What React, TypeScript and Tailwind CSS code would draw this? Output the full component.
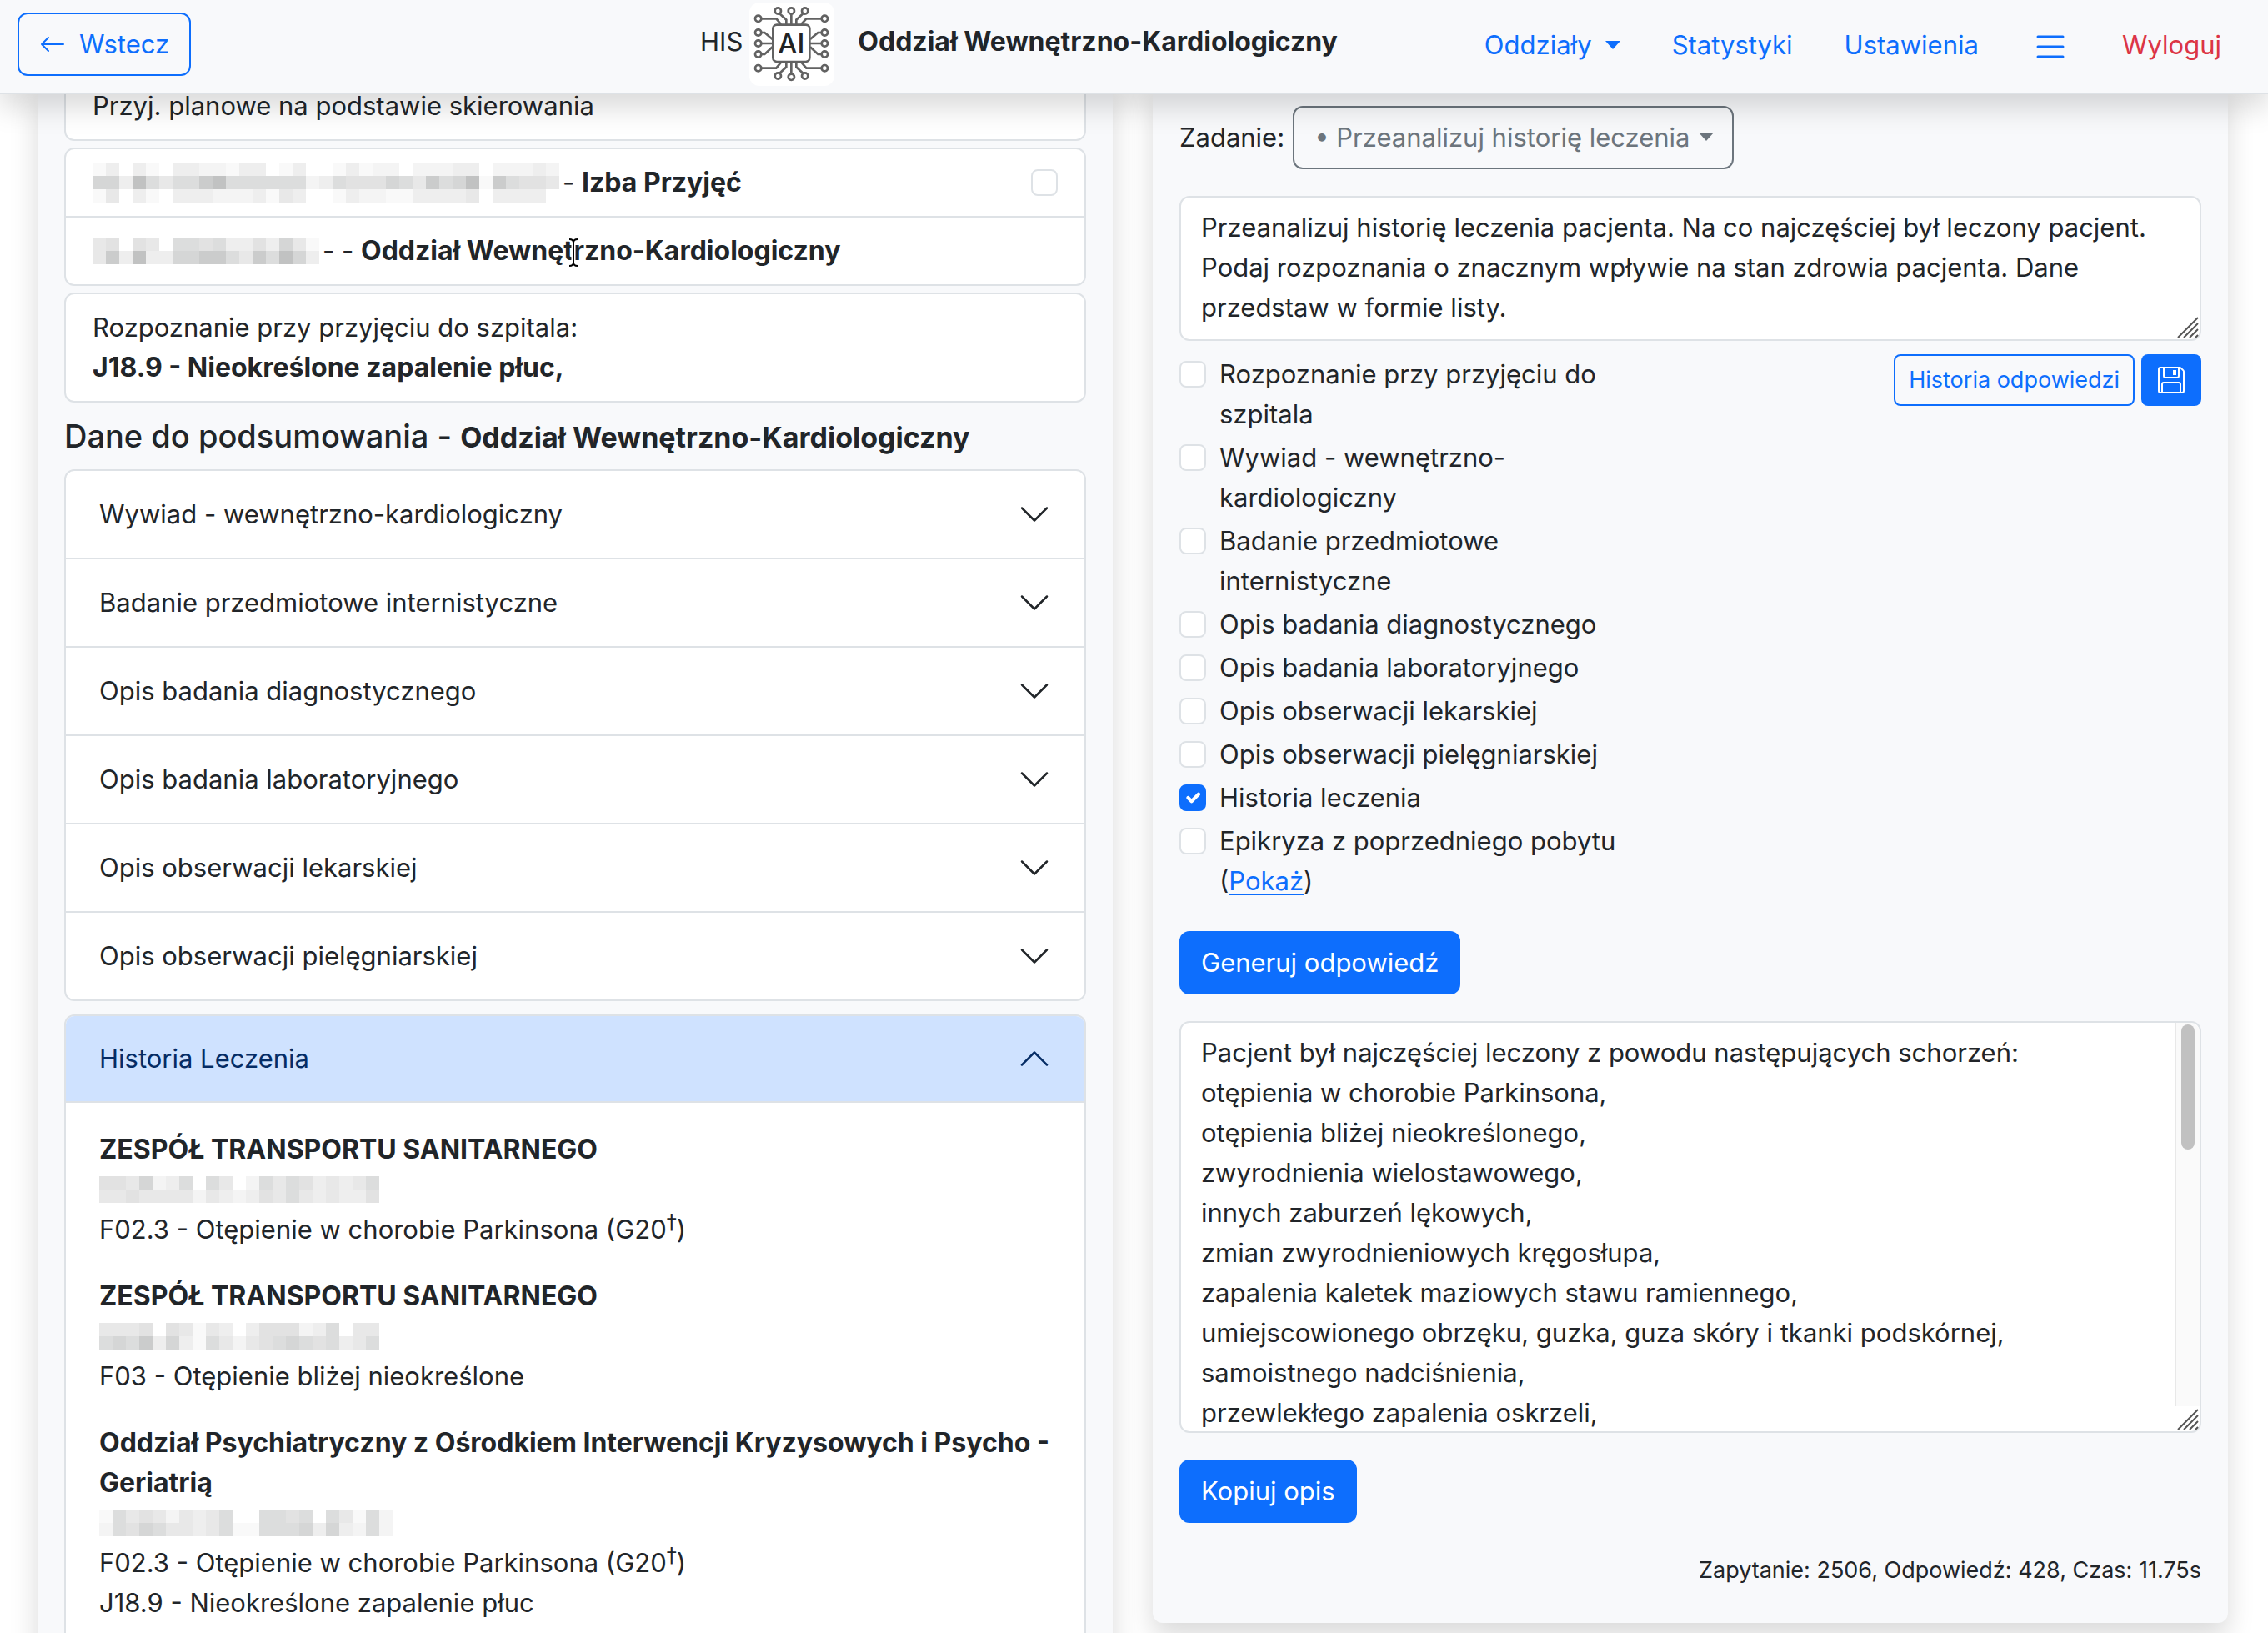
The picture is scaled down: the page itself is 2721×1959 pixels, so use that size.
import { useState } from "react";
import { BsArrowLeft, BsFloppy, BsList } from "react-icons/bs";

interface CheckOption {
  id: string;
  label: string;
  link?: string;
}

interface HistoryEntry {
  title: string;
  mask: string[];
  diagnoses: { text: string; sup?: boolean }[];
}

const sections = [
  "Wywiad - wewnętrzno-kardiologiczny",
  "Badanie przedmiotowe internistyczne",
  "Opis badania diagnostycznego",
  "Opis badania laboratoryjnego",
  "Opis obserwacji lekarskiej",
  "Opis obserwacji pielęgniarskiej",
];

const options: CheckOption[] = [
  { id: "rozpoznanie", label: "Rozpoznanie przy przyjęciu do szpitala" },
  { id: "wywiad", label: "Wywiad - wewnętrzno-kardiologiczny" },
  { id: "przedmiotowe", label: "Badanie przedmiotowe internistyczne" },
  { id: "diagnostyczne", label: "Opis badania diagnostycznego" },
  { id: "laboratoryjne", label: "Opis badania laboratoryjnego" },
  { id: "lekarskie", label: "Opis obserwacji lekarskiej" },
  { id: "pielegniarskie", label: "Opis obserwacji pielęgniarskiej" },
  { id: "historia", label: "Historia leczenia" },
  { id: "epikryza", label: "Epikryza z poprzedniego pobytu", link: "Pokaż" },
];

const history: HistoryEntry[] = [
  {
    title: "ZESPÓŁ TRANSPORTU SANITARNEGO",
    mask: ["554723606402646534346", "445444424323546434335"],
    diagnoses: [{ text: "F02.3 - Otępienie w chorobie Parkinsona", sup: true }],
  },
  {
    title: "ZESPÓŁ TRANSPORTU SANITARNEGO",
    mask: ["444505414303555236044", "676837316424567656346"],
    diagnoses: [{ text: "F03 - Otępienie bliżej nieokreślone" }],
  },
  {
    title:
      "Oddział Psychiatryczny z Ośrodkiem Interwencji Kryzysowych i Psycho - Geriatrią",
    mask: ["1645424346006656064162", "2657644346116667373262"],
    diagnoses: [
      { text: "F02.3 - Otępienie w chorobie Parkinsona", sup: true },
      { text: "J18.9 - Nieokreślone zapalenie płuc" },
    ],
  },
];

const prompt =
  "Przeanalizuj historię leczenia pacjenta. Na co najczęściej był leczony pacjent. Podaj rozpoznania o znacznym wpływie na stan zdrowia pacjenta. Dane przedstaw w formie listy.";

const answer = [
  "Pacjent był najczęściej leczony z powodu następujących schorzeń:",
  "otępienia w chorobie Parkinsona,",
  "otępienia bliżej nieokreślonego,",
  "zwyrodnienia wielostawowego,",
  "innych zaburzeń lękowych,",
  "zmian zwyrodnieniowych kręgosłupa,",
  "zapalenia kaletek maziowych stawu ramiennego,",
  "umiejscowionego obrzęku, guzka, guza skóry i tkanki podskórnej,",
  "samoistnego nadciśnienia,",
  "przewlekłego zapalenia oskrzeli,",
].join("\n");

const shades = [
  "#ffffff",
  "#f9f9f9",
  "#f4f4f4",
  "#eeeeee",
  "#e8e8e8",
  "#e2e2e2",
  "#dcdddd",
  "#d5d6d6",
  "#cbcccc",
  "#c1c2c2",
];

// Pixelated block covering personal data, one digit per 16px cell
function Mask({ rows }: { rows: string[] }) {
  return (
    <svg
      width={rows[0].length * 16}
      height={rows.length * 16}
      shapeRendering="crispEdges"
      aria-hidden="true"
    >
      {rows.map((row, y) =>
        row
          .split("")
          .map((c, x) => (
            <rect
              key={`${x}-${y}`}
              x={x * 16}
              y={y * 16}
              width="16"
              height="16"
              fill={shades[Number(c)]}
            />
          ))
      )}
    </svg>
  );
}

function Logo() {
  const nodes = [
    [59, 67], [59, 117], [59, 156], [59, 195], [59, 245],
    [298, 67], [298, 117], [298, 156], [298, 195], [298, 245],
    [130, 39], [178, 39], [227, 39],
    [130, 273], [178, 277], [227, 273],
  ];
  return (
    <svg
      viewBox="27 9 306 300"
      className="h-[100px] w-[102px] rounded-xl bg-white"
      aria-hidden="true"
    >
      <g fill="none" stroke="#626262" strokeWidth="8">
        <rect x="112" y="89" width="132" height="133" rx="14" />
        {nodes.map(([cx, cy]) => (
          <circle key={`${cx}-${cy}`} cx={cx} cy={cy} r="11" />
        ))}
        <path d="M70 67h54l17 20M70 117h12l28 24M70 156h40M70 195h12l28-26M70 245h54l17-21" />
        <path d="M287 67h-55l-18 20M287 117h-13l-28 24M287 156h-41M287 195h-13l-28-26M287 245h-55l-18-21" />
        <path d="M136 49l24 22v17M178 50v38M220 49l-24 22v17M136 263l24-22v-17M178 266v-42M220 263l-24-22v-17" />
      </g>
      <text
        x="178"
        y="192"
        textAnchor="middle"
        fill="#222"
        fontSize="98"
        fontWeight="500"
        fontFamily="Inter, sans-serif"
      >
        AI
      </text>
    </svg>
  );
}

function Caret({ className }: { className?: string }) {
  return (
    <svg
      viewBox="0 0 18 10"
      className={`h-[10px] w-[18px] ${className ?? ""}`}
      aria-hidden="true"
    >
      <path d="M0 0h18L9 10z" fill="currentColor" />
    </svg>
  );
}

function Chevron({ up }: { up?: boolean }) {
  return (
    <svg
      viewBox="0 0 16 16"
      className={up ? "size-10 shrink-0 rotate-180" : "size-10 shrink-0"}
      fill="none"
      stroke="currentColor"
      strokeLinecap="round"
      strokeLinejoin="round"
      aria-hidden="true"
    >
      <path d="m2 5 6 6 6-6" />
    </svg>
  );
}

function Grip() {
  return (
    <svg
      viewBox="0 0 26 26"
      className="absolute right-[3px] bottom-[3px] size-[26px]"
      stroke="#555"
      strokeWidth="2"
      aria-hidden="true"
    >
      <path d="M1 25 25 1M8 25 25 8M15 25 25 15M22 25l3-3" />
    </svg>
  );
}

function Checkbox({
  id,
  label,
  checked,
  onChange,
}: {
  id: string;
  label?: string;
  checked: boolean;
  onChange: () => void;
}) {
  return (
    <span className="relative block size-8 shrink-0">
      <input
        id={id}
        type="checkbox"
        aria-label={label}
        checked={checked}
        onChange={onChange}
        className="block size-8 appearance-none rounded-lg border-2 border-[#dee2e6] bg-white checked:border-[#0d6efd] checked:bg-[#0d6efd]"
      />
      {checked && (
        <svg
          viewBox="0 0 20 20"
          className="pointer-events-none absolute inset-0.5 size-7"
          fill="none"
          stroke="#fff"
          strokeWidth="3"
          strokeLinecap="round"
          strokeLinejoin="round"
        >
          <path d="m6 10 3 3 6-6" />
        </svg>
      )}
    </span>
  );
}

function Header() {
  return (
    <header className="relative z-10 flex h-[113px] items-start border-b-2 border-[#dee2e6] bg-[#f8f9fb] pr-14 pl-[21px] shadow-[0_16px_32px_rgba(0,0,0,0.15)]">
      <button className="mt-[15px] flex items-center gap-4 rounded-xl border-2 border-[#0d6efd] px-6 py-3 text-[#0d6efd]">
        <BsArrowLeft className="size-8" />
        Wstecz
      </button>
      <div className="mt-[3px] flex flex-1 items-center justify-end whitespace-nowrap">
        <span className="mr-2 pb-1.5">HIS</span>
        <Logo />
        <h1 className="ml-7 pb-1.5 text-[32px]/[48px] font-bold">
          Oddział Wewnętrzno-Kardiologiczny
        </h1>
      </div>
      <nav className="mt-7 ml-44 flex items-center gap-[62px] text-[#0d6efd]">
        <button className="flex items-center gap-4">
          Oddziały
          <Caret />
        </button>
        <a href="#statystyki">Statystyki</a>
        <a href="#ustawienia">Ustawienia</a>
        <button aria-label="Menu" className="pt-1">
          <BsList className="size-12" />
        </button>
        <a href="#wyloguj" className="text-[#dc3545]">
          Wyloguj
        </a>
      </nav>
    </header>
  );
}

function PatientPanel() {
  const [admission, setAdmission] = useState(false);
  return (
    <section className="flex-1 self-stretch bg-[#f8f9fb] px-8 pb-8 shadow-[0_16px_32px_rgba(0,0,0,0.15)]">
      <div className="rounded-b-xl border-2 border-t-0 border-[#dee2e6] bg-white px-8 pb-4">
        Przyj. planowe na podstawie skierowania
      </div>

      <ul className="mt-2 rounded-xl border-2 border-[#dee2e6] bg-white">
        <li className="flex items-center border-b-2 border-[#dee2e6] px-8 py-4">
          <Mask
            rows={[
              "13031033221330130013122022233022232",
              "77396466896666662365557648679186554",
              "14031033322231430013221133334033330",
            ]}
          />
          <span className="ml-1 flex-1">
            - <strong className="text-[32px]">Izba Przyjęć</strong>
          </span>
          <Checkbox
            id="izba"
            label="Izba Przyjęć"
            checked={admission}
            onChange={() => setAdmission(!admission)}
          />
        </li>
        <li className="relative flex items-center px-8 py-4">
          <Mask rows={["45054066563353741", "48393377886486973"]} />
          <span className="ml-1 h-12">
            - -{" "}
            <strong className="text-[32px]">
              Oddział Wewnętrzno-Kardiologiczny
            </strong>
          </span>
          <svg
            viewBox="0 0 14 36"
            className="absolute top-6 left-[602px] h-9 w-3.5"
            fill="none"
            aria-hidden="true"
          >
            <path
              d="M2 2q5 0 5 4q0-4 5-4M7 6v24M2 34q5 0 5-4q0 4 5 4"
              stroke="#fff"
              strokeWidth="5"
            />
            <path
              d="M2 2q5 0 5 4q0-4 5-4M7 6v24M2 34q5 0 5-4q0 4 5 4"
              stroke="#000"
              strokeWidth="2"
            />
          </svg>
        </li>
      </ul>

      <div className="mt-2 rounded-xl border-2 border-[#dee2e6] bg-white px-8 py-4">
        <p>Rozpoznanie przy przyjęciu do szpitala:</p>
        <p className="text-[32px]/[48px] font-bold">
          J18.9 - Nieokreślone zapalenie płuc,
        </p>
      </div>

      <h2 className="my-4 text-[38px]/[48px] font-medium">
        Dane do podsumowania -{" "}
        <strong className="text-[34px]/[34px]">
          Oddział Wewnętrzno-Kardiologiczny
        </strong>
      </h2>

      <div className="divide-y-2 divide-[#dee2e6] rounded-xl border-2 border-[#dee2e6] bg-white">
        {sections.map((name) => (
          <button
            key={name}
            className="flex w-full items-center justify-between px-10 py-7 text-left"
          >
            {name}
            <Chevron />
          </button>
        ))}
      </div>

      <div className="mt-4 overflow-hidden rounded-xl border-2 border-[#dee2e6] bg-white">
        <button className="flex h-[104px] w-full items-center justify-between border-b-2 border-[#dee2e6] bg-[#cfe2ff] px-10 text-left text-[#052c65]">
          Historia Leczenia
          <Chevron up />
        </button>
        <div className="flex flex-col gap-8 px-10 py-8">
          {history.map((entry, i) => (
            <div key={i}>
              <h3 className="text-[32px]/[48px] font-bold">{entry.title}</h3>
              <div className="flex h-12 items-center">
                <Mask rows={entry.mask} />
              </div>
              {entry.diagnoses.map((d) => (
                <p key={d.text}>
                  {d.text}
                  {d.sup && (
                    <>
                      {" "}
                      (G20
                      <sup className="font-['DejaVu_Sans',sans-serif] text-[24px]">
                        †
                      </sup>
                      )
                    </>
                  )}
                </p>
              ))}
            </div>
          ))}
        </div>
      </div>
    </section>
  );
}

function AssistantPanel() {
  const [checked, setChecked] = useState<string[]>(["historia"]);
  const [promptText, setPromptText] = useState(prompt);

  const toggle = (id: string) => {
    setChecked((prev) =>
      prev.includes(id) ? prev.filter((c) => c !== id) : [...prev, id]
    );
  };

  return (
    <section className="flex-1 rounded-b-xl bg-[#f8f9fb] px-8 pt-6 pb-[42px] shadow-[0_16px_32px_rgba(0,0,0,0.15)]">
      <div className="flex items-center gap-2.5">
        <label htmlFor="zadanie">Zadanie:</label>
        <div className="relative text-[#6c757d]">
          <select
            id="zadanie"
            className="block h-[76px] appearance-none rounded-xl border-2 border-[#6c757d] bg-transparent pr-[50px] pl-6"
          >
            <option>• Przeanalizuj historię leczenia</option>
          </select>
          <Caret className="pointer-events-none absolute top-8 right-6" />
        </div>
      </div>

      <div className="relative mt-8">
        <textarea
          aria-label="Treść zadania"
          value={promptText}
          onChange={(e) => setPromptText(e.target.value)}
          className="block h-[174px] w-full resize-none overflow-hidden rounded-xl border-2 border-[#dee2e6] bg-white px-6 py-3"
        />
        <Grip />
      </div>

      <div className="mt-4 flex items-start justify-between">
        <ul className="w-[44%]">
          {options.map((option) => (
            <li key={option.id} className="mb-1 flex gap-4">
              <div className="pt-2">
                <Checkbox
                  id={option.id}
                  checked={checked.includes(option.id)}
                  onChange={() => toggle(option.id)}
                />
              </div>
              <div>
                <label htmlFor={option.id}>{option.label}</label>
                {option.link && (
                  <>
                    {" "}
                    (
                    <a
                      href="#epikryza"
                      className="text-[#0d6efd] underline decoration-2 underline-offset-4"
                    >
                      {option.link}
                    </a>
                    )
                  </>
                )}
              </div>
            </li>
          ))}
        </ul>
        <div className="flex gap-2">
          <button className="rounded-lg border-2 border-[#0d6efd] px-4 py-2 text-[27px]/[42px] text-[#0d6efd]">
            Historia odpowiedzi
          </button>
          <button
            aria-label="Zapisz"
            className="flex items-center rounded-lg bg-[#0d6efd] px-5 text-white"
          >
            <BsFloppy className="size-8" />
          </button>
        </div>
      </div>

      <button className="mt-8 block rounded-xl bg-[#0d6efd] px-[26px] py-3.5 text-white">
        Generuj odpowiedź
      </button>

      <div className="relative mt-8">
        <textarea
          aria-label="Odpowiedź"
          readOnly
          value={answer}
          className="block h-[494px] w-full resize-none overflow-hidden rounded-xl border-2 border-[#dee2e6] bg-white px-6 py-3"
        />
        <div className="absolute top-0.5 right-0.5 bottom-8 w-[30px] rounded-tr-xl border-l-2 border-[#e8e8e8] bg-[#fafafa]">
          <div className="mx-1.5 mt-0.5 h-[150px] w-4 rounded-full bg-[#c1c1c1]" />
        </div>
        <Grip />
      </div>

      <button className="mt-8 block rounded-xl bg-[#0d6efd] px-[26px] py-3.5 text-white">
        Kopiuj opis
      </button>

      <p className="mt-9 text-right text-[27px]/[42px]">
        Zapytanie: 2506, Odpowiedź: 428, Czas: 11.75s
      </p>
    </section>
  );
}

export default function App() {
  return (
    <div className="h-screen overflow-hidden bg-white font-['Inter','Liberation_Sans',sans-serif] text-[31px]/[48px] text-[#212529]">
      <Header />
      {/* content is scrolled slightly under the header */}
      <main className="-mt-2.5 flex items-start gap-12 pr-12 pl-[45px]">
        <PatientPanel />
        <AssistantPanel />
      </main>
    </div>
  );
}
